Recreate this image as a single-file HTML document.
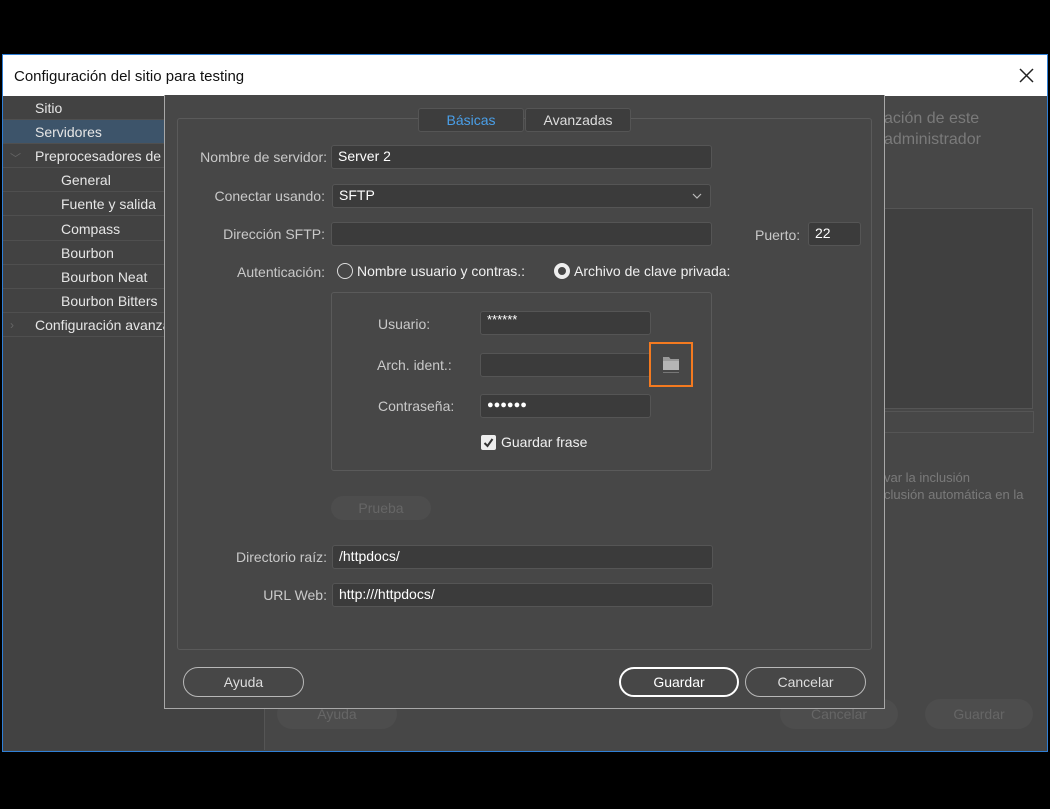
<!DOCTYPE html>
<html><head><meta charset="utf-8"><style>
*{margin:0;padding:0;box-sizing:border-box}
body{width:1050px;height:809px;background:#000;position:relative;overflow:hidden;font-family:"Liberation Sans","DejaVu Sans",sans-serif;font-size:14px}
.a{position:absolute}
.lbl{position:absolute;color:#c9c9c9;font-size:14px;text-align:right;white-space:nowrap}
.fld{position:absolute;background:#3b3b3b;border:1px solid #555;border-radius:3px;color:#fff;font-size:14px;padding-left:6px;line-height:21px;white-space:nowrap}
.row{position:absolute;left:3px;width:161px;height:24px;border-bottom:1px solid #4f4f4f;color:#e6e6e6;font-size:14px;line-height:24px;white-space:nowrap;overflow:hidden}
.btn{position:absolute;height:30px;border:1px solid #b8b8b8;border-radius:15px;color:#ddd;text-align:center;line-height:28px;font-size:14px}
.gh{position:absolute;height:30px;background:#4d4d4d;border-radius:15px;color:#666;text-align:center;line-height:30px;font-size:14px}
.ghost{color:#7a7a7a;position:absolute;white-space:nowrap}
</style></head><body>
<div class="a" style="left:2px;top:54px;width:1046px;height:698px;border:1px solid #2f7fd6;background:#474747"></div>
<div class="a" style="left:3px;top:55px;width:1044px;height:41px;background:#fff"></div>
<div class="a" style="left:14px;top:68px;color:#111;font-size:15px">Configuración del sitio para testing</div>
<svg class="a" style="left:1019px;top:68px" width="15" height="15"><path d="M1 1L14 14M14 1L1 14" stroke="#222" stroke-width="1.5"/></svg>
<div class="a" style="left:3px;top:96px;width:261px;height:654px;background:#424242"></div>
<div class="a" style="left:264px;top:96px;width:1px;height:654px;background:#555"></div>
<div class="row" style="top:96px;padding-left:32px">Sitio</div>
<div class="row" style="top:120px;padding-left:32px;background:#3d546a">Servidores</div>
<div class="row" style="top:144px;padding-left:32px">Preprocesadores de</div>
<div class="a" style="left:10px;top:150px;color:#666;font-size:11px">﹀</div>
<div class="row" style="top:168px;padding-left:58px">General</div>
<div class="row" style="top:192px;padding-left:58px">Fuente y salida</div>
<div class="row" style="top:217px;padding-left:58px">Compass</div>
<div class="row" style="top:241px;padding-left:58px">Bourbon</div>
<div class="row" style="top:265px;padding-left:58px">Bourbon Neat</div>
<div class="row" style="top:289px;padding-left:58px">Bourbon Bitters</div>
<div class="row" style="top:313px;padding-left:32px">Configuración avanzada</div>
<div class="a" style="left:10px;top:318px;color:#666;font-size:12px">›</div>
<div class="ghost" style="left:884px;top:110px;font-size:16px">ación de este</div>
<div class="ghost" style="left:884px;top:131px;font-size:16px">administrador</div>
<div class="a" style="left:884px;top:208px;width:149px;height:201px;background:#404040;border:1px solid #555;border-left:none"></div>
<div class="a" style="left:884px;top:411px;width:150px;height:22px;border:1px solid #555;border-left:none"></div>
<div class="ghost" style="left:884px;top:470px;font-size:13px">var la inclusión</div>
<div class="ghost" style="left:884px;top:487px;font-size:13px">clusión automática en la</div>
<div class="gh" style="left:277px;top:699px;width:120px">Ayuda</div>
<div class="gh" style="left:780px;top:699px;width:118px">Cancelar</div>
<div class="gh" style="left:925px;top:699px;width:108px">Guardar</div>
<div class="a" style="left:164px;top:95px;width:721px;height:614px;background:#474747;border:1px solid #a8a8a8;border-top:none"></div>
<div class="a" style="left:177px;top:118px;width:695px;height:532px;border:1px solid #5a5a5a;border-radius:3px"></div>
<div class="a" style="left:418px;top:108px;width:106px;height:24px;background:#3d3d3d;border:1px solid #555;border-radius:3px;color:#4a9fe8;text-align:center;line-height:22px">Básicas</div>
<div class="a" style="left:525px;top:108px;width:106px;height:24px;background:#3d3d3d;border:1px solid #555;border-radius:3px;color:#ddd;text-align:center;line-height:22px">Avanzadas</div>
<div class="lbl" style="right:723px;top:149px">Nombre de servidor:</div>
<div class="fld" style="left:331px;top:145px;width:381px;height:24px">Server 2</div>
<div class="lbl" style="right:725px;top:188px">Conectar usando:</div>
<div class="fld" style="left:332px;top:184px;width:379px;height:24px">SFTP</div>
<svg class="a" style="left:692px;top:192px" width="10" height="8"><path d="M1 2L5 6L9 2" stroke="#bbb" fill="none" stroke-width="1.2"/></svg>
<div class="lbl" style="right:725px;top:226px">Dirección SFTP:</div>
<div class="fld" style="left:331px;top:222px;width:381px;height:24px"></div>
<div class="lbl" style="left:755px;top:227px">Puerto:</div>
<div class="fld" style="left:808px;top:222px;width:53px;height:24px">22</div>
<div class="lbl" style="right:725px;top:264px">Autenticación:</div>
<div class="a" style="left:337px;top:263px;width:16px;height:16px;border:1.5px solid #ddd;border-radius:50%"></div>
<div class="a" style="left:357px;top:263px;color:#f0f0f0">Nombre usuario y contras.:</div>
<div class="a" style="left:554px;top:263px;width:16px;height:16px;border:4px solid #eee;border-radius:50%;background:#474747"></div>
<div class="a" style="left:574px;top:263px;color:#f0f0f0">Archivo de clave privada:</div>
<div class="a" style="left:331px;top:292px;width:381px;height:179px;border:1px solid #5a5a5a;border-radius:3px"></div>
<div class="lbl" style="left:378px;top:316px">Usuario:</div>
<div class="fld" style="left:480px;top:311px;width:171px;height:24px;line-height:16px;font-size:13px">******</div>
<div class="lbl" style="left:377px;top:357px">Arch. ident.:</div>
<div class="fld" style="left:480px;top:353px;width:171px;height:24px"></div>
<div class="a" style="left:649px;top:342px;width:44px;height:45px;border:2px solid #f47a20"></div>
<svg class="a" style="left:662px;top:355px" width="18" height="19"><path d="M1 2H7L8.5 4H17V15H1Z" fill="#9a9a9a"/><rect x="1" y="6" width="16" height="9" fill="#b5b5b5"/><rect x="1" y="17" width="16" height="1" fill="#777"/></svg>
<div class="lbl" style="left:378px;top:398px">Contraseña:</div>
<div class="fld" style="left:480px;top:394px;width:171px;height:24px;font-size:11px;letter-spacing:0">●●●●●●</div>
<div class="a" style="left:481px;top:435px;width:15px;height:15px;background:#eee;border-radius:2px"></div>
<svg class="a" style="left:482px;top:436px" width="13" height="13"><path d="M2.5 7L5.5 10L10.5 3" stroke="#333" stroke-width="2" fill="none"/></svg>
<div class="a" style="left:501px;top:434px;color:#f0f0f0">Guardar frase</div>
<div class="gh" style="left:331px;top:496px;width:100px;height:24px;line-height:24px;border-radius:12px">Prueba</div>
<div class="lbl" style="right:723px;top:549px">Directorio raíz:</div>
<div class="fld" style="left:332px;top:545px;width:381px;height:24px">/httpdocs/</div>
<div class="lbl" style="right:723px;top:587px">URL Web:</div>
<div class="fld" style="left:332px;top:583px;width:381px;height:24px">http:///httpdocs/</div>
<div class="btn" style="left:183px;top:667px;width:121px">Ayuda</div>
<div class="btn" style="left:619px;top:667px;width:120px;border:2px solid #fff;color:#fff;line-height:26px">Guardar</div>
<div class="btn" style="left:745px;top:667px;width:121px">Cancelar</div>
</body></html>
